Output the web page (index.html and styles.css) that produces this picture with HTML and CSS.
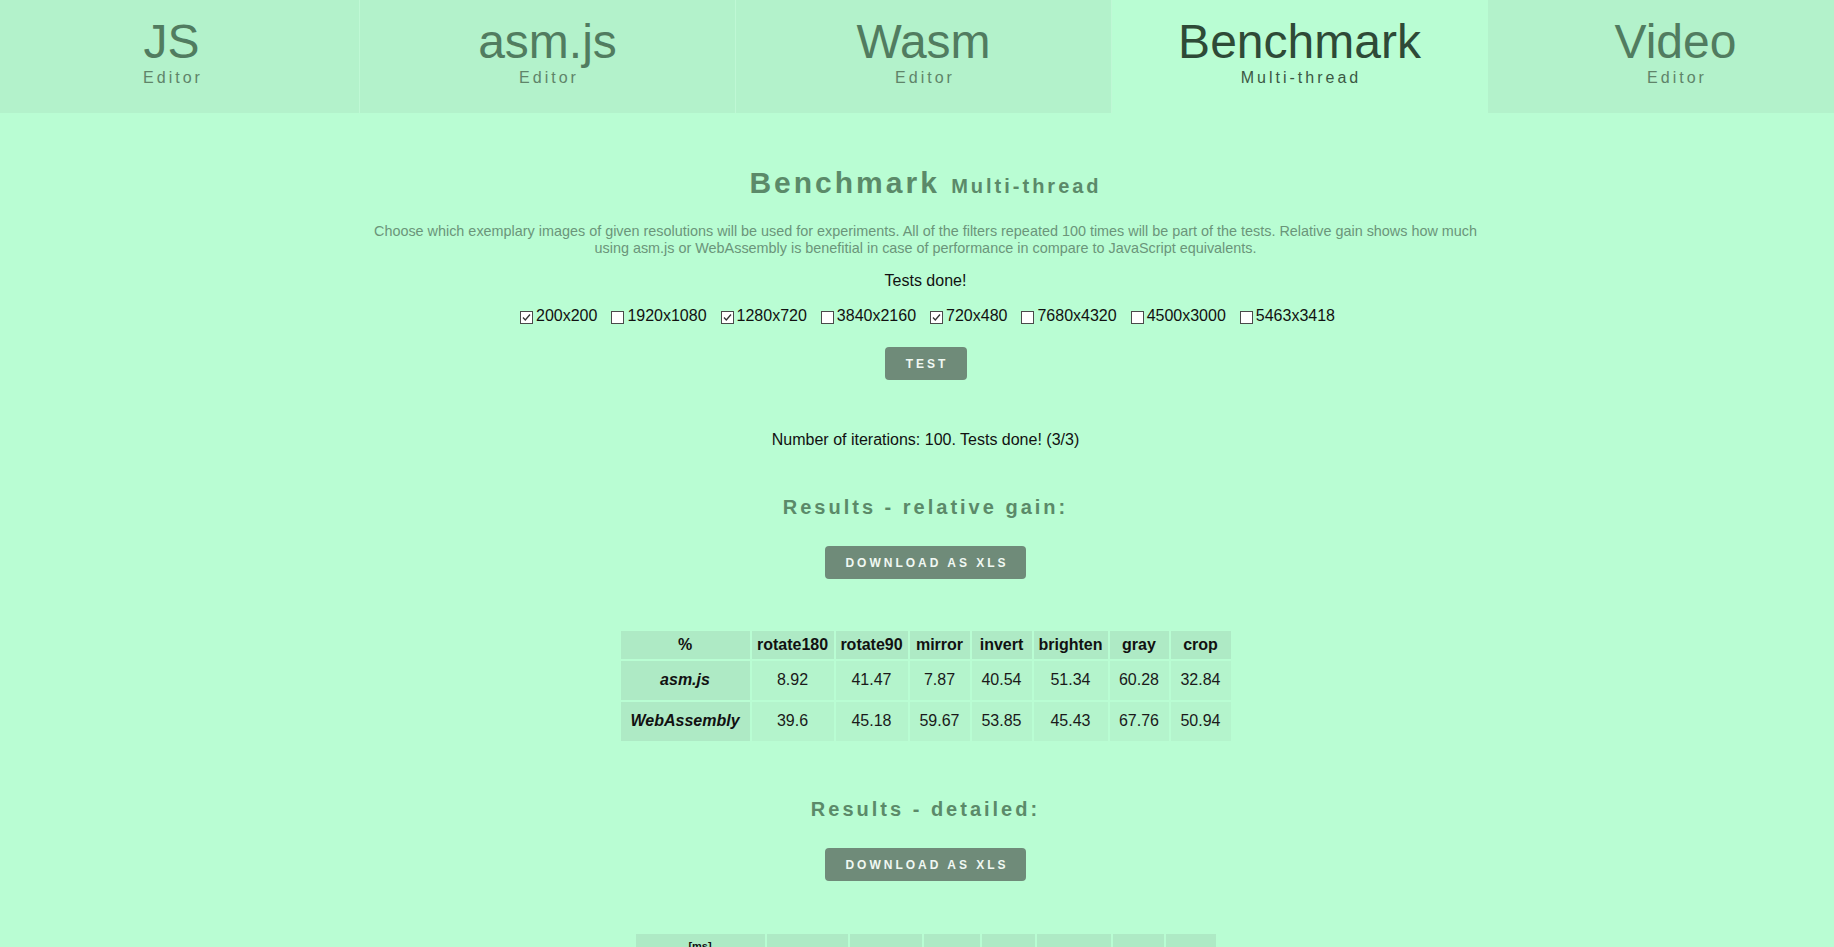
FILE: index.html
```html
<!DOCTYPE html>
<html lang="en">
<head>
<meta charset="utf-8">
<title>Benchmark - Multi-thread</title>
<link rel="stylesheet" href="styles.css">
</head>
<body>
<header class="tabs">
  <nav class="tab-row">
    <a class="tab" href="#"><span class="tab-title">JS</span><span class="tab-sub">Editor</span></a>
    <a class="tab" href="#"><span class="tab-title">asm.js</span><span class="tab-sub">Editor</span></a>
    <a class="tab" href="#"><span class="tab-title">Wasm</span><span class="tab-sub">Editor</span></a>
    <a class="tab tab-active" href="#"><span class="tab-title">Benchmark</span><span class="tab-sub">Multi-thread</span></a>
    <a class="tab" href="#"><span class="tab-title">Video</span><span class="tab-sub">Editor</span></a>
  </nav>
</header>
<main class="content">
  <h1 class="page-title">Benchmark <small class="page-title-sub">Multi-thread</small></h1>
  <p class="desc">Choose which exemplary images of given resolutions will be used for experiments. All of the filters repeated 100 times will be part of the tests. Relative gain shows how much using asm.js or WebAssembly is benefitial in case of performance in compare to JavaScript equivalents.</p>
  <p class="status">Tests done!</p>
  <div class="res-list">
    <label class="res"><span class="cb"><svg viewBox="0 0 11 11" width="11" height="11"><path d="M2 5.5 L4.3 8 L9 2.5" fill="none" stroke="#333" stroke-width="1.3"/></svg></span>200x200</label>
    <label class="res"><span class="cb"></span>1920x1080</label>
    <label class="res"><span class="cb"><svg viewBox="0 0 11 11" width="11" height="11"><path d="M2 5.5 L4.3 8 L9 2.5" fill="none" stroke="#333" stroke-width="1.3"/></svg></span>1280x720</label>
    <label class="res"><span class="cb"></span>3840x2160</label>
    <label class="res"><span class="cb"><svg viewBox="0 0 11 11" width="11" height="11"><path d="M2 5.5 L4.3 8 L9 2.5" fill="none" stroke="#333" stroke-width="1.3"/></svg></span>720x480</label>
    <label class="res"><span class="cb"></span>7680x4320</label>
    <label class="res"><span class="cb"></span>4500x3000</label>
    <label class="res"><span class="cb"></span>5463x3418</label>
  </div>
  <button class="btn btn-test">TEST</button>
  <p class="iterations">Number of iterations: 100. Tests done! (3/3)</p>
  <h2 class="section-title">Results - relative gain:</h2>
  <button class="btn">DOWNLOAD AS XLS</button>
  <table class="results gain">
    <thead>
      <tr><th class="c1">%</th><th class="c2">rotate180</th><th class="c3">rotate90</th><th class="c4">mirror</th><th class="c5">invert</th><th class="c6">brighten</th><th class="c7">gray</th><th class="c8">crop</th></tr>
    </thead>
    <tbody>
      <tr><th class="row-label">asm.js</th><td>8.92</td><td>41.47</td><td>7.87</td><td>40.54</td><td>51.34</td><td>60.28</td><td>32.84</td></tr>
      <tr><th class="row-label">WebAssembly</th><td>39.6</td><td>45.18</td><td>59.67</td><td>53.85</td><td>45.43</td><td>67.76</td><td>50.94</td></tr>
    </tbody>
  </table>
  <h2 class="section-title section-detailed">Results - detailed:</h2>
  <button class="btn">DOWNLOAD AS XLS</button>
  <table class="results detailed">
    <thead>
      <tr><th class="d1"><span class="unit">[ms]</span><br>resolution</th><th class="d2">rotate180</th><th class="d3">rotate90</th><th class="d4">mirror</th><th class="d5">invert</th><th class="d6">brighten</th><th class="d7">gray</th><th class="d8">crop</th></tr>
    </thead>
    <tbody>
      <tr><th class="row-label">200x200</th><td>-</td><td>-</td><td>-</td><td>-</td><td>-</td><td>-</td><td>-</td></tr>
    </tbody>
  </table>
</main>
</body>
</html>
```
FILE: styles.css
```css
html, body {
  margin: 0;
  padding: 0;
}
body {
  background: #b9fdd3;
  font-family: "Liberation Sans", Arial, sans-serif;
  color: #111;
  font-size: 16px;
}

/* ---------- tabs ---------- */
.tabs {
  background: #b3f2cb;
  overflow: hidden;
  height: 113px;
}
.tab-row {
  display: grid;
  grid-template-columns: repeat(5, 376px);
  margin-left: -16px;
  height: 100%;
}
.tab {
  display: flex;
  flex-direction: column;
  align-items: center;
  text-decoration: none;
  color: #517c60;
  padding-top: 18px;
  border-right: 1px solid #bff8d5;
  box-sizing: border-box;
}
.tab-active {
  background: #b9fdd3;
  color: #2e4a37;
  border-right-color: #b9fdd3;
}
.tab-title {
  font-size: 48px;
  line-height: 48px;
}
.tab-sub {
  font-size: 16px;
  line-height: 16px;
  letter-spacing: 3px;
  margin-top: 4px;
  padding-left: 3px;
  color: #5f8469;
}
.tab-active .tab-sub {
  color: #3b5844;
}

/* ---------- content ---------- */
.content {
  display: flex;
  flex-direction: column;
  align-items: center;
  text-align: center;
  padding-left: 17px;
}
.page-title {
  margin: 52px 0 0;
  font-size: 30px;
  line-height: 36px;
  letter-spacing: 3px;
  font-weight: bold;
  color: #5b8a69;
}
.page-title-sub {
  font-size: 20px;
  letter-spacing: 3px;
}
.desc {
  margin: 19px 0 0;
  max-width: 1120px;
  font-size: 14.4px;
  line-height: 16.5px;
  color: #6b957a;
}
.status {
  margin: 16px 0 0;
  line-height: 18px;
}
.res-list {
  display: flex;
  gap: 10px;
  margin-top: 16px;
  line-height: 20px;
}
.res {
  display: inline-flex;
  align-items: center;
  white-space: nowrap;
}
.cb {
  display: inline-flex;
  align-items: center;
  justify-content: center;
  width: 13px;
  height: 13px;
  box-sizing: border-box;
  margin: 0 3px 0 4px;
  border: 1px solid #4a4a4a;
  background: #fff;
  position: relative;
  top: 1px;
}
.btn {
  margin-top: 27px;
  height: 33px;
  padding: 0 17px 0 20px;
  border: none;
  border-radius: 4px;
  background: #6f8b79;
  color: #f0f8f2;
  font-family: "Liberation Sans", Arial, sans-serif;
  font-size: 12px;
  font-weight: bold;
  letter-spacing: 3px;
}
.btn-test {
  margin-top: 21px;
  min-width: 82px;
}
.iterations {
  margin: 51px 0 0;
  line-height: 18px;
}
.section-title {
  margin: 46px 0 0;
  font-size: 20px;
  line-height: 24px;
  letter-spacing: 3px;
  font-weight: bold;
  color: #5b8a69;
}
.section-detailed {
  margin-top: 54px;
}

/* ---------- tables ---------- */
.results {
  margin-top: 50px;
  border-spacing: 2px;
  table-layout: fixed;
}
.results.detailed {
  margin-top: 51px;
}
.results th,
.results td {
  padding: 5px 4px;
  font-size: 16px;
  line-height: 18px;
  text-align: center;
}
.results th {
  background: #aeeac5;
  font-weight: bold;
}
.results td {
  background: #b4f4cc;
  padding: 10px 4px 11px;
  color: #1a1a1a;
}
.results .row-label {
  font-style: italic;
  padding: 10px 4px 11px;
}
.gain .c1 { width: 121px; }
.gain .c2 { width: 74px; }
.gain .c3 { width: 64px; }
.gain .c4 { width: 52px; }
.gain .c5 { width: 52px; }
.gain .c6 { width: 66px; }
.gain .c7 { width: 51px; }
.gain .c8 { width: 52px; }

.detailed th {
  vertical-align: bottom;
}
.detailed thead .d1 { width: 121px; padding-top: 2px; }
.detailed .d2 { width: 73px; }
.detailed .d3 { width: 64px; }
.detailed .d4 { width: 48px; }
.detailed .d5 { width: 45px; }
.detailed .d6 { width: 66px; }
.detailed .d7 { width: 43px; }
.detailed .d8 { width: 42px; }
.unit {
  font-size: 11px;
  line-height: 11px;
  display: inline-block;
}
```
